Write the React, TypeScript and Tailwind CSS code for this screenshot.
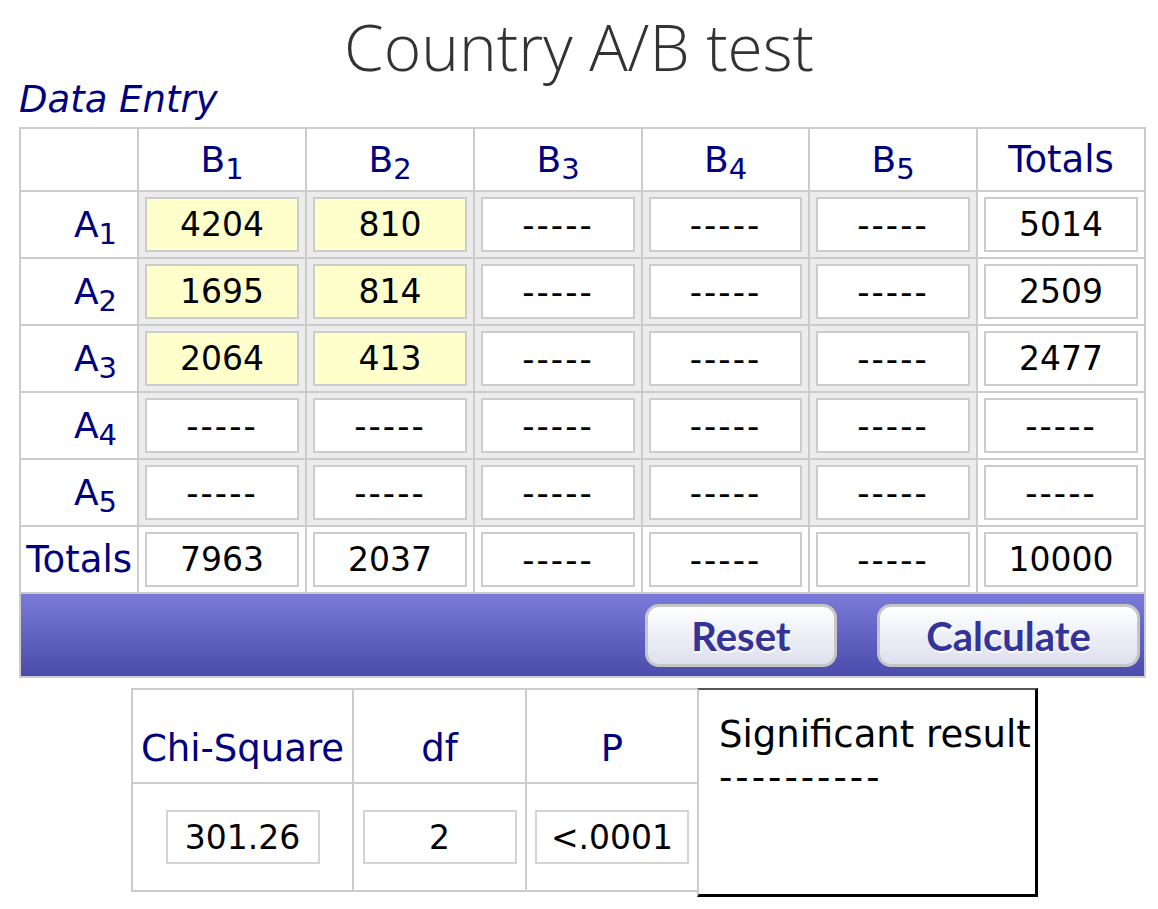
import React from 'react';

type Row = {
  label: string;
  cells: string[];
  total: string;
  filled?: boolean;
};

const DASH = '-----';

const rows: Row[] = [
  { label: '1', cells: ['4204', '810', DASH, DASH, DASH], total: '5014', filled: true },
  { label: '2', cells: ['1695', '814', DASH, DASH, DASH], total: '2509', filled: true },
  { label: '3', cells: ['2064', '413', DASH, DASH, DASH], total: '2477', filled: true },
  { label: '4', cells: [DASH, DASH, DASH, DASH, DASH], total: DASH },
  { label: '5', cells: [DASH, DASH, DASH, DASH, DASH], total: DASH },
];

const colTotals = ['7963', '2037', DASH, DASH, DASH];

const Cell: React.FC<{ value: string; yellow?: boolean }> = ({ value, yellow = false }) => (
  <input
    readOnly
    value={value}
    className={`w-full h-full border-2 border-[#cccccc] text-center text-black outline-none ${
      value === DASH ? 'text-[34px] tracking-[2px]' : 'text-[33px]'
    } ${yellow ? 'bg-[#ffffcc]' : 'bg-white'}`}
  />
);

const Sub: React.FC<{ letter: string; n: string }> = ({ letter, n }) => (
  <span>
    {letter}
    <sub className="text-[29px] relative top-[7px] align-baseline">{n}</sub>
  </span>
);

const btn =
  "h-[63px] rounded-[14px] border-[3px] border-[#c6c6c6] bg-linear-to-b from-white to-[#dde0ee] text-[40px] leading-none font-bold text-[#333399] font-['Lato',sans-serif] [text-shadow:1px_2px_0_#ffffff]";

export default function App() {
  return (
    <div className="min-h-[909px] bg-white px-[19px] font-['DejaVu_Sans',Verdana,sans-serif]">
      <h1 className="pt-[15px] text-center text-[64px] leading-[64px] font-light text-[#333333] font-['Open_Sans',sans-serif]">
        Country A/B test
      </h1>

      <div className="mt-[3px] text-[37px] leading-[36px] italic text-[#000080]">Data Entry</div>

      {/* Data entry grid */}
      <div className="mt-[9px] w-[1127px] grid grid-cols-[116px_166px_166px_166px_165px_166px_166px] grid-rows-[61px_65px_65px_65px_65px_65px_65px_82px] gap-[2px] p-[2px] bg-[#cccccc]">
        <div className="bg-white" />
        {['1', '2', '3', '4', '5'].map((n) => (
          <div key={n} className="bg-white flex items-center justify-center text-[36px] text-[#000080]">
            <Sub letter="B" n={n} />
          </div>
        ))}
        <div className="bg-white flex items-center justify-center text-[37px] text-[#000080]">Totals</div>

        {rows.map((row, i) => (
          <React.Fragment key={i}>
            <div className="bg-white flex items-center justify-end pr-[20px] text-[36px] text-[#000080]">
              <Sub letter="A" n={row.label} />
            </div>
            {row.cells.map((c, j) => (
              <div key={j} className="bg-[#ececec] px-[6px] py-[5px]">
                <Cell value={c} yellow={row.filled && j < 2} />
              </div>
            ))}
            <div className="bg-white px-[6px] py-[5px]">
              <Cell value={row.total} />
            </div>
          </React.Fragment>
        ))}

        <div className="bg-white flex items-center justify-end pr-[5px] text-[37px] text-[#000080]">Totals</div>
        {colTotals.map((c, j) => (
          <div key={j} className="bg-white px-[6px] py-[5px]">
            <Cell value={c} />
          </div>
        ))}
        <div className="bg-white px-[6px] py-[5px]">
          <Cell value="10000" />
        </div>

        {/* Button bar */}
        <div className="col-span-7 bg-linear-to-b from-[#7a7ad9] to-[#4b4bab] flex items-start justify-end gap-[40px] pt-[10px] pr-[4px]">
          <button className={`w-[192px] ${btn}`}>Reset</button>
          <button className={`w-[263px] ${btn}`}>Calculate</button>
        </div>
      </div>

      {/* Results */}
      <div className="ml-[112px] mt-[10px] flex items-start">
        <div className="grid grid-cols-[219px_171px_170px] grid-rows-[92px_106px] gap-[2px] pl-[2px] py-[2px] bg-[#cccccc]">
          {['Chi-Square', 'df', 'P'].map((h) => (
            <div key={h} className="bg-white flex items-end justify-center pb-[6px] text-[37px] text-[#000080]">
              {h}
            </div>
          ))}
          {['301.26', '2', '<.0001'].map((v) => (
            <div key={v} className="bg-white flex items-center justify-center">
              <input
                readOnly
                value={v}
                className="w-[154px] h-[54px] border-2 border-[#d4d4d4] bg-white text-center text-[33px] text-black outline-none"
              />
            </div>
          ))}
        </div>
        <div className="w-[341px] h-[209px] border-l-2 border-l-[#cccccc] border-t-2 border-t-[#555555] border-r-[3px] border-r-black border-b-[3px] border-b-black pl-[20px] pt-[23px] text-[37px] leading-[43px] text-black">
          <div>Significant result</div>
          <div className="tracking-[3px]">----------</div>
        </div>
      </div>
    </div>
  );
}
